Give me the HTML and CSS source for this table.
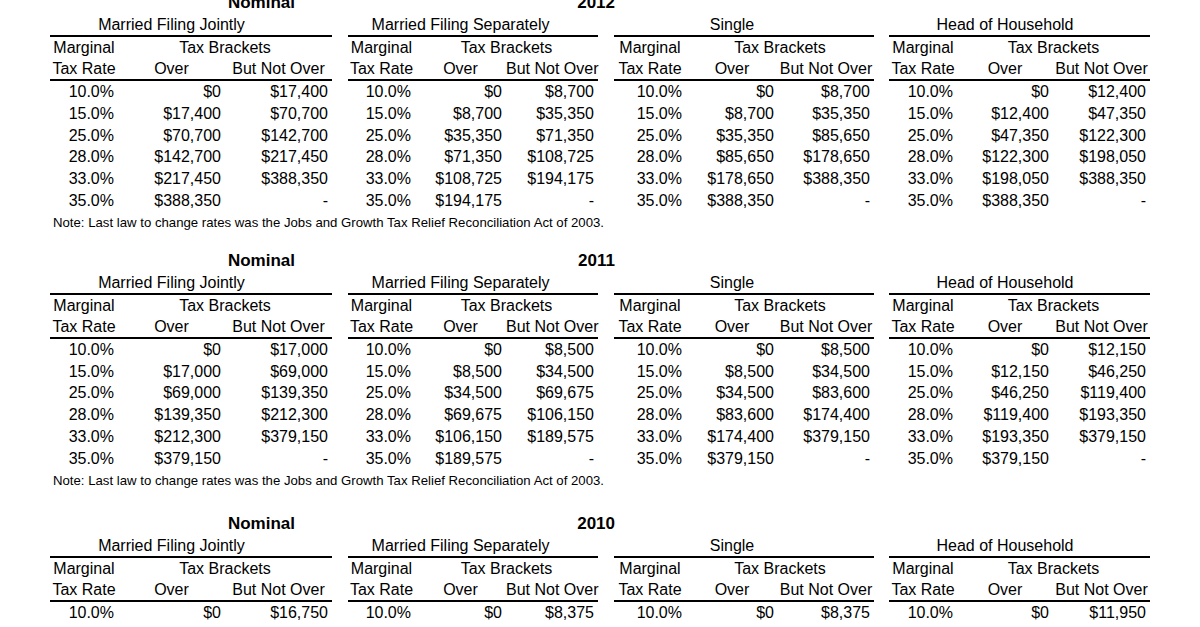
FILE: index.html
```html
<!DOCTYPE html>
<html lang="en">
<head>
    <meta charset="UTF-8">
    <meta name="viewport" content="width=device-width, initial-scale=1.0">
    <title>Federal Income Tax Brackets</title>
    <link rel="stylesheet" href="styles.css">
</head>
<body>
<div class="page">

    <!-- 2012 -->
    <div class="section">
        <div class="title"><span class="title-label">Nominal</span><span class="title-year">2012</span></div>
        <table class="brackets">
            <colgroup>
                <col class="w-mfj-rate"><col class="w-mfj-over"><col class="w-mfj-bno"><col class="w-gap">
                <col class="w-mfs-rate"><col class="w-mfs-over"><col class="w-mfs-bno"><col class="w-gap">
                <col class="w-s-rate"><col class="w-s-over"><col class="w-s-bno"><col class="w-gap2">
                <col class="w-hoh-rate"><col class="w-hoh-over"><col class="w-hoh-bno">
            </colgroup>
            <thead>
                <tr class="grp">
                    <th></th><th><div class="spill">Married Filing Jointly</div></th><th></th><th class="sp"></th>
                    <th></th><th><div class="spill">Married Filing Separately</div></th><th></th><th class="sp"></th>
                    <th></th><th><div class="spill">Single</div></th><th></th><th class="sp"></th>
                    <th></th><th><div class="spill">Head of Household</div></th><th></th>
                </tr>
                <tr class="sub">
                    <th>Marginal</th><th colspan="2">Tax Brackets</th><th class="sp"></th>
                    <th>Marginal</th><th colspan="2">Tax Brackets</th><th class="sp"></th>
                    <th>Marginal</th><th colspan="2">Tax Brackets</th><th class="sp"></th>
                    <th>Marginal</th><th colspan="2">Tax Brackets</th>
                </tr>
                <tr class="cols">
                    <th>Tax Rate</th><th>Over</th><th>But Not Over</th><th class="sp"></th>
                    <th>Tax Rate</th><th>Over</th><th>But Not Over</th><th class="sp"></th>
                    <th>Tax Rate</th><th>Over</th><th>But Not Over</th><th class="sp"></th>
                    <th>Tax Rate</th><th>Over</th><th>But Not Over</th>
                </tr>
            </thead>
            <tbody>
                <tr><td>10.0%</td><td>$0</td><td>$17,400</td><td class="sp"></td><td>10.0%</td><td>$0</td><td>$8,700</td><td class="sp"></td><td>10.0%</td><td>$0</td><td>$8,700</td><td class="sp"></td><td>10.0%</td><td>$0</td><td>$12,400</td></tr>
                <tr><td>15.0%</td><td>$17,400</td><td>$70,700</td><td class="sp"></td><td>15.0%</td><td>$8,700</td><td>$35,350</td><td class="sp"></td><td>15.0%</td><td>$8,700</td><td>$35,350</td><td class="sp"></td><td>15.0%</td><td>$12,400</td><td>$47,350</td></tr>
                <tr><td>25.0%</td><td>$70,700</td><td>$142,700</td><td class="sp"></td><td>25.0%</td><td>$35,350</td><td>$71,350</td><td class="sp"></td><td>25.0%</td><td>$35,350</td><td>$85,650</td><td class="sp"></td><td>25.0%</td><td>$47,350</td><td>$122,300</td></tr>
                <tr><td>28.0%</td><td>$142,700</td><td>$217,450</td><td class="sp"></td><td>28.0%</td><td>$71,350</td><td>$108,725</td><td class="sp"></td><td>28.0%</td><td>$85,650</td><td>$178,650</td><td class="sp"></td><td>28.0%</td><td>$122,300</td><td>$198,050</td></tr>
                <tr><td>33.0%</td><td>$217,450</td><td>$388,350</td><td class="sp"></td><td>33.0%</td><td>$108,725</td><td>$194,175</td><td class="sp"></td><td>33.0%</td><td>$178,650</td><td>$388,350</td><td class="sp"></td><td>33.0%</td><td>$198,050</td><td>$388,350</td></tr>
                <tr><td>35.0%</td><td>$388,350</td><td>-</td><td class="sp"></td><td>35.0%</td><td>$194,175</td><td>-</td><td class="sp"></td><td>35.0%</td><td>$388,350</td><td>-</td><td class="sp"></td><td>35.0%</td><td>$388,350</td><td>-</td></tr>
            </tbody>
        </table>
        <div class="note">Note: Last law to change rates was the Jobs and Growth Tax Relief Reconciliation Act of 2003.</div>
    </div>

    <!-- 2011 -->
    <div class="section section-wide">
        <div class="title"><span class="title-label">Nominal</span><span class="title-year">2011</span></div>
        <table class="brackets">
            <colgroup>
                <col class="w-mfj-rate"><col class="w-mfj-over"><col class="w-mfj-bno"><col class="w-gap">
                <col class="w-mfs-rate"><col class="w-mfs-over"><col class="w-mfs-bno"><col class="w-gap">
                <col class="w-s-rate"><col class="w-s-over"><col class="w-s-bno"><col class="w-gap2">
                <col class="w-hoh-rate"><col class="w-hoh-over"><col class="w-hoh-bno">
            </colgroup>
            <thead>
                <tr class="grp">
                    <th></th><th><div class="spill">Married Filing Jointly</div></th><th></th><th class="sp"></th>
                    <th></th><th><div class="spill">Married Filing Separately</div></th><th></th><th class="sp"></th>
                    <th></th><th><div class="spill">Single</div></th><th></th><th class="sp"></th>
                    <th></th><th><div class="spill">Head of Household</div></th><th></th>
                </tr>
                <tr class="sub">
                    <th>Marginal</th><th colspan="2">Tax Brackets</th><th class="sp"></th>
                    <th>Marginal</th><th colspan="2">Tax Brackets</th><th class="sp"></th>
                    <th>Marginal</th><th colspan="2">Tax Brackets</th><th class="sp"></th>
                    <th>Marginal</th><th colspan="2">Tax Brackets</th>
                </tr>
                <tr class="cols">
                    <th>Tax Rate</th><th>Over</th><th>But Not Over</th><th class="sp"></th>
                    <th>Tax Rate</th><th>Over</th><th>But Not Over</th><th class="sp"></th>
                    <th>Tax Rate</th><th>Over</th><th>But Not Over</th><th class="sp"></th>
                    <th>Tax Rate</th><th>Over</th><th>But Not Over</th>
                </tr>
            </thead>
            <tbody>
                <tr><td>10.0%</td><td>$0</td><td>$17,000</td><td class="sp"></td><td>10.0%</td><td>$0</td><td>$8,500</td><td class="sp"></td><td>10.0%</td><td>$0</td><td>$8,500</td><td class="sp"></td><td>10.0%</td><td>$0</td><td>$12,150</td></tr>
                <tr><td>15.0%</td><td>$17,000</td><td>$69,000</td><td class="sp"></td><td>15.0%</td><td>$8,500</td><td>$34,500</td><td class="sp"></td><td>15.0%</td><td>$8,500</td><td>$34,500</td><td class="sp"></td><td>15.0%</td><td>$12,150</td><td>$46,250</td></tr>
                <tr><td>25.0%</td><td>$69,000</td><td>$139,350</td><td class="sp"></td><td>25.0%</td><td>$34,500</td><td>$69,675</td><td class="sp"></td><td>25.0%</td><td>$34,500</td><td>$83,600</td><td class="sp"></td><td>25.0%</td><td>$46,250</td><td>$119,400</td></tr>
                <tr><td>28.0%</td><td>$139,350</td><td>$212,300</td><td class="sp"></td><td>28.0%</td><td>$69,675</td><td>$106,150</td><td class="sp"></td><td>28.0%</td><td>$83,600</td><td>$174,400</td><td class="sp"></td><td>28.0%</td><td>$119,400</td><td>$193,350</td></tr>
                <tr><td>33.0%</td><td>$212,300</td><td>$379,150</td><td class="sp"></td><td>33.0%</td><td>$106,150</td><td>$189,575</td><td class="sp"></td><td>33.0%</td><td>$174,400</td><td>$379,150</td><td class="sp"></td><td>33.0%</td><td>$193,350</td><td>$379,150</td></tr>
                <tr><td>35.0%</td><td>$379,150</td><td>-</td><td class="sp"></td><td>35.0%</td><td>$189,575</td><td>-</td><td class="sp"></td><td>35.0%</td><td>$379,150</td><td>-</td><td class="sp"></td><td>35.0%</td><td>$379,150</td><td>-</td></tr>
            </tbody>
        </table>
        <div class="note">Note: Last law to change rates was the Jobs and Growth Tax Relief Reconciliation Act of 2003.</div>
    </div>

    <!-- 2010 -->
    <div class="section">
        <div class="title"><span class="title-label">Nominal</span><span class="title-year">2010</span></div>
        <table class="brackets">
            <colgroup>
                <col class="w-mfj-rate"><col class="w-mfj-over"><col class="w-mfj-bno"><col class="w-gap">
                <col class="w-mfs-rate"><col class="w-mfs-over"><col class="w-mfs-bno"><col class="w-gap">
                <col class="w-s-rate"><col class="w-s-over"><col class="w-s-bno"><col class="w-gap2">
                <col class="w-hoh-rate"><col class="w-hoh-over"><col class="w-hoh-bno">
            </colgroup>
            <thead>
                <tr class="grp">
                    <th></th><th><div class="spill">Married Filing Jointly</div></th><th></th><th class="sp"></th>
                    <th></th><th><div class="spill">Married Filing Separately</div></th><th></th><th class="sp"></th>
                    <th></th><th><div class="spill">Single</div></th><th></th><th class="sp"></th>
                    <th></th><th><div class="spill">Head of Household</div></th><th></th>
                </tr>
                <tr class="sub">
                    <th>Marginal</th><th colspan="2">Tax Brackets</th><th class="sp"></th>
                    <th>Marginal</th><th colspan="2">Tax Brackets</th><th class="sp"></th>
                    <th>Marginal</th><th colspan="2">Tax Brackets</th><th class="sp"></th>
                    <th>Marginal</th><th colspan="2">Tax Brackets</th>
                </tr>
                <tr class="cols">
                    <th>Tax Rate</th><th>Over</th><th>But Not Over</th><th class="sp"></th>
                    <th>Tax Rate</th><th>Over</th><th>But Not Over</th><th class="sp"></th>
                    <th>Tax Rate</th><th>Over</th><th>But Not Over</th><th class="sp"></th>
                    <th>Tax Rate</th><th>Over</th><th>But Not Over</th>
                </tr>
            </thead>
            <tbody>
                <tr><td>10.0%</td><td>$0</td><td>$16,750</td><td class="sp"></td><td>10.0%</td><td>$0</td><td>$8,375</td><td class="sp"></td><td>10.0%</td><td>$0</td><td>$8,375</td><td class="sp"></td><td>10.0%</td><td>$0</td><td>$11,950</td></tr>
                <tr><td>15.0%</td><td>$16,750</td><td>$68,000</td><td class="sp"></td><td>15.0%</td><td>$8,375</td><td>$34,000</td><td class="sp"></td><td>15.0%</td><td>$8,375</td><td>$34,000</td><td class="sp"></td><td>15.0%</td><td>$11,950</td><td>$45,550</td></tr>
                <tr><td>25.0%</td><td>$68,000</td><td>$137,300</td><td class="sp"></td><td>25.0%</td><td>$34,000</td><td>$68,650</td><td class="sp"></td><td>25.0%</td><td>$34,000</td><td>$82,400</td><td class="sp"></td><td>25.0%</td><td>$45,550</td><td>$117,650</td></tr>
                <tr><td>28.0%</td><td>$137,300</td><td>$209,250</td><td class="sp"></td><td>28.0%</td><td>$68,650</td><td>$104,625</td><td class="sp"></td><td>28.0%</td><td>$82,400</td><td>$171,850</td><td class="sp"></td><td>28.0%</td><td>$117,650</td><td>$190,550</td></tr>
                <tr><td>33.0%</td><td>$209,250</td><td>$373,650</td><td class="sp"></td><td>33.0%</td><td>$104,625</td><td>$186,825</td><td class="sp"></td><td>33.0%</td><td>$171,850</td><td>$373,650</td><td class="sp"></td><td>33.0%</td><td>$190,550</td><td>$373,650</td></tr>
                <tr><td>35.0%</td><td>$373,650</td><td>-</td><td class="sp"></td><td>35.0%</td><td>$186,825</td><td>-</td><td class="sp"></td><td>35.0%</td><td>$373,650</td><td>-</td><td class="sp"></td><td>35.0%</td><td>$373,650</td><td>-</td></tr>
            </tbody>
        </table>
        <div class="note">Note: Last law to change rates was the Jobs and Growth Tax Relief Reconciliation Act of 2003.</div>
    </div>

</div>
</body>
</html>
```

FILE: styles.css
```css
/* Tablas de tramos, estilo hoja de cálculo */
body {
    margin: 0;
    font-family: "Liberation Sans", Arial, sans-serif;
    color: #000;
    background-color: #fff;
}
.page {
    margin-top: -9px;
}
.section {
    margin-bottom: 15px;
}
.section-wide {
    margin-bottom: 20px;
}
.title {
    display: flex;
    height: 22px;
    padding-top: 1px;
    line-height: 21px;
    box-sizing: border-box;
    font-size: 17px;
    font-weight: bold;
}
.title-label {
    width: 295px;
    text-align: right;
}
.title-year {
    width: 320px;
    text-align: right;
}
.brackets {
    margin-left: 50px;
    width: 1100px;
    table-layout: fixed;
    border-collapse: separate;
    border-spacing: 0;
    font-size: 16px;
}
.brackets th,
.brackets td {
    padding: 0;
    font-weight: normal;
    white-space: nowrap;
}
.brackets th {
    text-align: center;
}
.grp th {
    padding-top: 2px;
    line-height: 20px;
    border-bottom: 2px solid #000;
}
/* el título del grupo se desborda centrado sobre la columna "Over" */
.spill {
    display: flex;
    justify-content: center;
}
.sub th {
    line-height: 21px;
}
.cols th {
    line-height: 21px;
    border-bottom: 2px solid #000;
}
.brackets th.sp {
    border-bottom: none;
}
.brackets td {
    line-height: 21.8px;
    text-align: right;
    padding-right: 4px;
}
.note {
    font-size: 13.2px;
    line-height: 22px;
    padding-left: 53px;
}
/* anchos de columna */
.w-mfj-rate { width: 68px; }
.w-mfj-over { width: 107px; }
.w-mfj-bno { width: 107px; }
.w-gap { width: 16px; }
.w-gap2 { width: 15px; }
.w-mfs-rate { width: 67px; }
.w-mfs-over { width: 91px; }
.w-mfs-bno { width: 92px; }
.w-s-rate { width: 72px; }
.w-s-over { width: 92px; }
.w-s-bno { width: 96px; }
.w-hoh-rate { width: 68px; }
.w-hoh-over { width: 96px; }
.w-hoh-bno { width: 97px; }
```
